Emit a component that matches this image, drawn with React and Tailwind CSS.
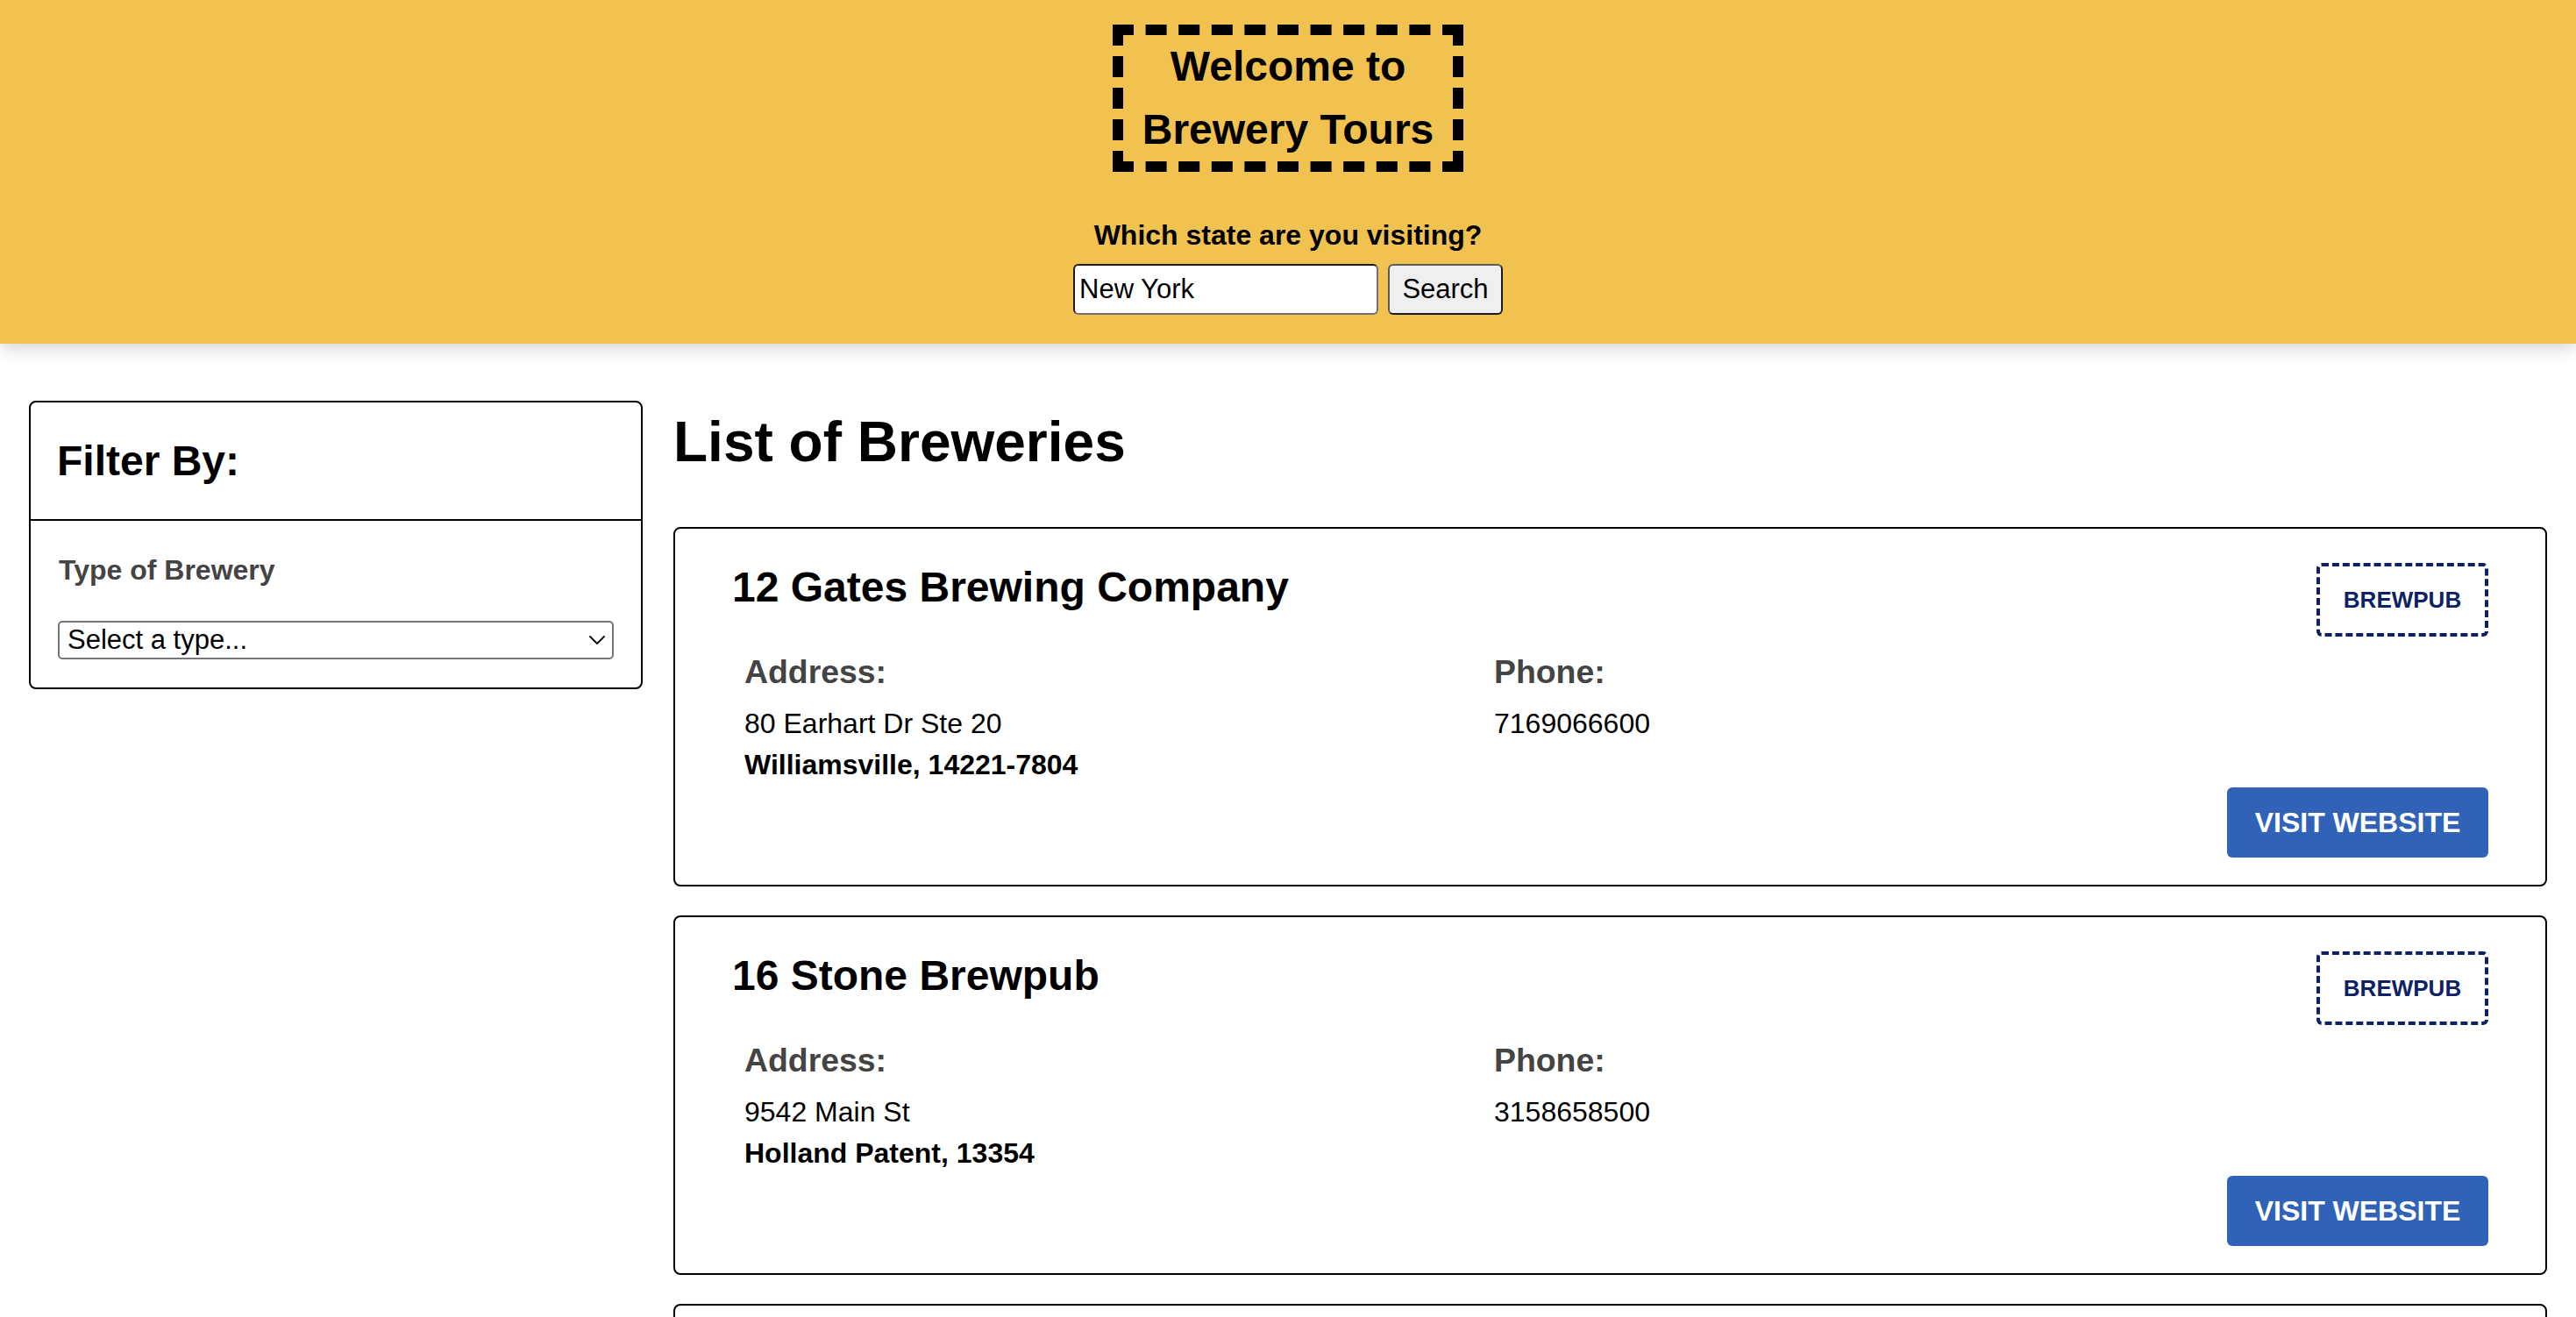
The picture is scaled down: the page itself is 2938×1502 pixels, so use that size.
import React, { useState } from "react";

const breweries = [
  {
    id: "12-gates",
    name: "12 Gates Brewing Company",
    type: "brewpub",
    street: "80 Earhart Dr Ste 20",
    city: "Williamsville",
    postal: "14221-7804",
    phone: "7169066600",
  },
  {
    id: "16-stone",
    name: "16 Stone Brewpub",
    type: "brewpub",
    street: "9542 Main St",
    city: "Holland Patent",
    postal: "13354",
    phone: "3158658500",
  },
  {
    id: "1940s",
    name: "1940's Brewing Company",
    type: "micro",
    street: "1337 Lincoln Ave",
    city: "Holbrook",
    postal: "11741-2215",
    phone: "6315880170",
  },
];

const Header = () => {
  const [state, setState] = useState("New York");

  return (
    <header className="relative z-10 h-[392px] bg-[#f1c24f] flex flex-col items-center pt-[28px] shadow-[0_6px_18px_rgba(0,0,0,0.16)]">
      {/* Logo box */}
      <h1 className="w-[400px] h-[168px] border-[12px] border-dashed border-black text-center text-[48px] leading-[72px] font-bold">
        Welcome to
        <br />
        Brewery Tours
      </h1>

      {/* State search */}
      <form
        className="mt-[54px] flex flex-col items-center"
        onSubmit={(e) => e.preventDefault()}
      >
        <label
          htmlFor="state"
          className="text-[32px] leading-[37px] font-bold"
        >
          Which state are you visiting?
        </label>
        <div className="mt-[14px] flex gap-[11px]">
          <input
            id="state"
            type="text"
            value={state}
            onChange={(e) => setState(e.target.value)}
            className="w-[348px] h-[58px] bg-white pl-[5px] text-[31px] rounded-[6px] border-2 border-t-[#1c1c1c] border-l-[#1c1c1c] border-r-[#707070] border-b-[#707070] outline-none"
          />
          <button
            type="submit"
            className="w-[131px] h-[58px] bg-[#efefef] text-[31px] rounded-[6px] border-2 border-[#1c1c1c] border-l-[#5a5a5a] border-t-[#5a5a5a]"
          >
            Search
          </button>
        </div>
      </form>
    </header>
  );
};

const FilterPanel = () => {
  const [type, setType] = useState("");

  return (
    <aside className="w-[700px] shrink-0 border-2 border-black rounded-[8px]">
      <div className="px-[30px] py-[39px] border-b-2 border-black">
        <h2 className="text-[48px] leading-[55px] font-bold">Filter By:</h2>
      </div>
      <div className="pl-[31px] pr-[31px] pt-[38px] pb-[32px]">
        <h3 className="ml-[1px] text-[32px] leading-[37px] font-bold text-[#444444]">
          Type of Brewery
        </h3>
        <div className="relative mt-[39px]">
          <select
            value={type}
            onChange={(e) => setType(e.target.value)}
            className="appearance-none w-full h-[44px] bg-white pl-[9px] text-[31px] leading-[40px] border-2 border-[#767676] rounded-[5px] outline-none"
          >
            <option value="">Select a type...</option>
            <option value="micro">Micro</option>
            <option value="regional">Regional</option>
            <option value="brewpub">Brewpub</option>
          </select>
          <svg
            className="absolute right-[10px] top-[17px] pointer-events-none"
            width="18"
            height="10"
            viewBox="0 0 18 10"
            fill="none"
          >
            <path
              d="M1 1l8 8 8-8"
              stroke="#111"
              strokeWidth="2"
              strokeLinecap="round"
              strokeLinejoin="round"
            />
          </svg>
        </div>
      </div>
    </aside>
  );
};

const BreweryCard = ({ brewery }) => (
  <li className="h-[410px] shrink-0 border-2 border-black rounded-[8px] px-[65px] pt-[39px] pb-[31px] flex flex-col">
    <div className="flex justify-between items-start">
      <h2 className="text-[48px] leading-[55px] font-bold">{brewery.name}</h2>
      <span className="w-[196px] h-[84px] flex items-center justify-center border-4 border-dashed border-[#0d2266] rounded-[6px] text-[26px] leading-[30px] font-bold uppercase text-[#0d2266]">
        {brewery.type}
      </span>
    </div>

    {/* Details */}
    <div className="mt-[18px] pl-[14px] flex">
      <section className="w-[855px]">
        <h3 className="text-[37.4px] leading-[44px] font-bold text-[#444444]">
          Address:
        </h3>
        <p className="mt-[14px] text-[32px] leading-[47px]">{brewery.street}</p>
        <p className="text-[32px] leading-[47px] font-bold">
          {brewery.city}, {brewery.postal}
        </p>
      </section>
      <section>
        <h3 className="text-[37.4px] leading-[44px] font-bold text-[#444444]">
          Phone:
        </h3>
        <p className="mt-[14px] text-[32px] leading-[47px]">{brewery.phone}</p>
      </section>
    </div>

    <div className="mt-[2px] flex justify-end">
      <a
        href="#"
        className="w-[298px] h-[80px] flex items-center justify-center bg-[#3063b8] rounded-[6px] text-white text-[32px] leading-[36px] font-bold"
      >
        VISIT WEBSITE
      </a>
    </div>
  </li>
);

export default function App() {
  return (
    <div className="h-screen overflow-hidden bg-white text-black font-['Liberation_Sans',Arial,sans-serif]">
      <Header />

      {/* Main Content */}
      <div className="flex items-start gap-[35px] px-[33px] pt-[65px]">
        <FilterPanel />

        <main className="flex-1 min-w-0">
          <h1 className="mt-[10px] text-[64px] leading-[74px] font-bold">
            List of Breweries
          </h1>
          <ul className="mt-[60px] flex flex-col gap-[33px]">
            {breweries.map((b) => (
              <BreweryCard key={b.id} brewery={b} />
            ))}
          </ul>
        </main>
      </div>
    </div>
  );
}
